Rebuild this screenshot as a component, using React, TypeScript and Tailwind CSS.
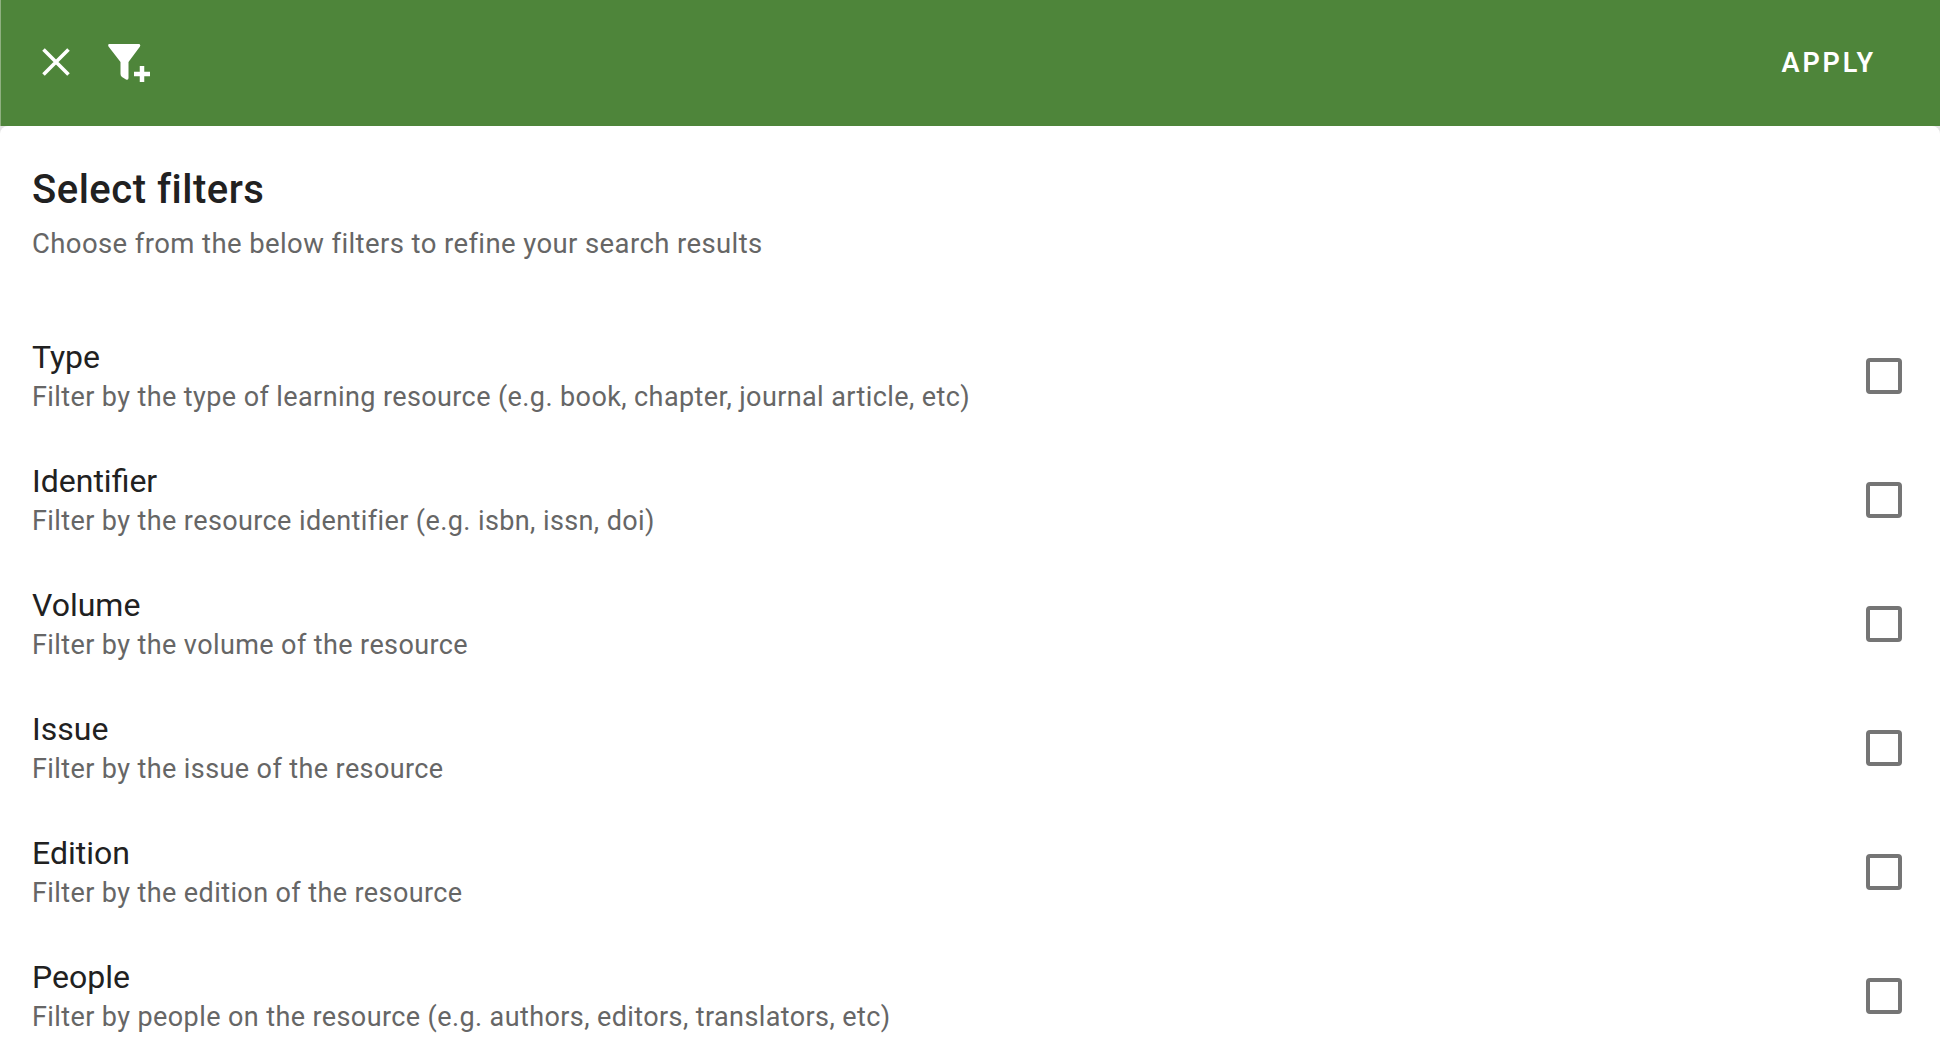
const filters = [
  { title: "Type", desc: "Filter by the type of learning resource (e.g. book, chapter, journal article, etc)" },
  { title: "Identifier", desc: "Filter by the resource identifier (e.g. isbn, issn, doi)" },
  { title: "Volume", desc: "Filter by the volume of the resource" },
  { title: "Issue", desc: "Filter by the issue of the resource" },
  { title: "Edition", desc: "Filter by the edition of the resource" },
  { title: "People", desc: "Filter by people on the resource (e.g. authors, editors, translators, etc)" },
];

const CloseIcon = () => (
  <svg width="28" height="28" viewBox="0 0 28 28" className="text-white">
    <path d="M1.5 1.5 L26.5 26.5 M26.5 1.5 L1.5 26.5" stroke="currentColor" strokeWidth="3.6" fill="none" />
  </svg>
);

const FilterPlusIcon = () => (
  <svg width="44" height="40" viewBox="0 0 44 40" className="text-white">
    <path
      d="M1.5 2 H30.5 Q33 2 32 4.5 L20.5 20 V36 Q20.5 38.5 18 37.5 L14 35 Q12.5 34 12.5 32 V20 L0.5 4.5 Q-0.5 2 1.5 2 Z"
      fill="currentColor"
    />
    <path d="M26 32 H42 M34 24 V40" stroke="currentColor" strokeWidth="4.5" fill="none" />
  </svg>
);

const App = () => {
  return (
    <div className="w-[1940px] h-[1060px] overflow-hidden bg-[#e4e4e4] font-['Roboto',sans-serif]">
      {/* Toolbar */}
      <div className="h-[126px] flex items-center justify-between pl-[41px] pr-[64px] bg-[#4e853a] border-l border-[#8fb080]">
        <div className="flex items-center gap-[38px] -mt-[2px]">
          <CloseIcon />
          <FilterPlusIcon />
        </div>
        <button className="text-white text-[27px] font-semibold tracking-[2.8px] leading-none">APPLY</button>
      </div>

      {/* Sheet */}
      <div className="h-[934px] bg-white rounded-t-[8px] pl-[32px] pr-[38px] pt-[40px]">
        <h2 className="text-[40px] leading-[48px] font-medium text-[#212121] tracking-[0.5px]">Select filters</h2>
        <p className="mt-[10px] text-[27.5px] leading-[40px] text-[#666666] tracking-[0.4px]">
          Choose from the below filters to refine your search results
        </p>

        {/* Filter rows */}
        <div className="mt-[50px]">
          {filters.map((filter) => (
            <div key={filter.title} className="h-[124px] flex items-center justify-between">
              <div className="pt-[2px]">
                <div className="text-[32px] leading-[40px] text-[#212121]">{filter.title}</div>
                <div className="text-[27px] leading-[40px] text-[#666666] tracking-[0.4px]">{filter.desc}</div>
              </div>
              <div className="w-[36px] h-[36px] border-[4px] border-[#757575] rounded-[4px]" />
            </div>
          ))}
        </div>
      </div>
    </div>
  );
};

export default App;
